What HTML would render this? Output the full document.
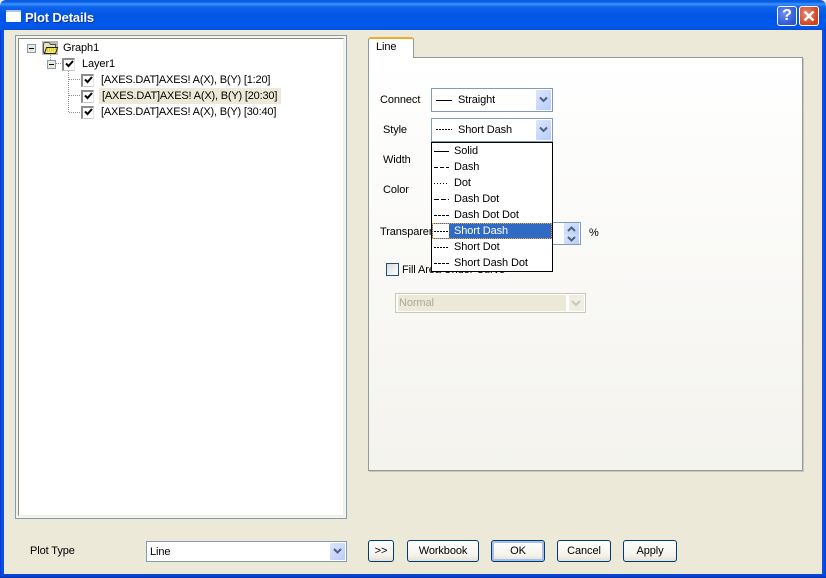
<!DOCTYPE html>
<html><head><meta charset="utf-8"><style>
html,body{margin:0;padding:0;width:826px;height:578px;overflow:hidden;background:#ECE9D8}
body{position:relative;font:11px/14px "Liberation Sans",sans-serif;color:#000;letter-spacing:-.1px}
div,span{position:absolute;box-sizing:border-box;white-space:nowrap}
svg{position:absolute;overflow:visible}
.t{height:14px}
.tr{letter-spacing:-.18px}
.combo{border:1px solid #7F9DB9;background:#fff}
.arrow{width:15px;background:linear-gradient(135deg,#DCE6FB,#B9CCF9);border-radius:1px;top:1px;bottom:1px;right:1px}
.btn{border:1px solid #003C74;border-radius:3px;background:linear-gradient(#fff,#F4F3EC 70%,#E3E0D3);text-align:center;line-height:20px;top:540px;height:22px}
.ck{width:13px;height:13px;border-top:2px solid #8d8d8d;border-left:2px solid #8d8d8d;border-right:1px solid #e4e4e4;border-bottom:1px solid #c8c8c8;background:#fff}
.ex{width:9px;height:9px;border:1px solid #7F9DB9;background:#ECE9D8}
.ex div{left:1px;top:3px;width:5px;height:1px;background:#000}
</style></head><body>
<div style="left:0;top:0;width:826px;height:30px;background:linear-gradient(#0A5BDC 0,#0A5FE8 2px,#3A93FF 4px,#0F63EA 7px,#0055E5 16px,#0058EE 26px,#0350D8 30px);border-radius:6px 6px 0 0"></div>
<div style="left:0;top:30px;width:4px;height:548px;background:linear-gradient(90deg,#0831D9,#0855DD 50%,#0A4BE0)"></div>
<div style="left:822px;top:30px;width:4px;height:548px;background:linear-gradient(90deg,#0A4BE0,#0855DD 50%,#0831D9)"></div>
<div style="left:0;top:574px;width:826px;height:4px;background:linear-gradient(#0A4BE0,#0841D0 50%,#0831B0)"></div>
<div style="left:6px;top:10px;width:15px;height:12px;background:#fff;border-top:2px solid #A9C8F5;border-radius:1px"></div>
<div style="left:25px;top:10px;color:#fff;font-size:13px;line-height:15px;font-weight:bold;letter-spacing:-.15px;text-shadow:1px 1px 0 #0A2E9C">Plot Details</div>
<div style="left:777px;top:6px;width:20px;height:20px;border:1px solid #fff;border-radius:3px;background:radial-gradient(circle at 35% 35%,#6C8EEF,#2A56D8 75%);color:#fff;font:bold 16px/18px 'Liberation Sans',sans-serif;letter-spacing:0;text-align:center">?</div>
<div style="left:799px;top:6px;width:20px;height:20px;border:1px solid #fff;border-radius:3px;background:radial-gradient(circle at 35% 35%,#E8866A,#D2401C 75%)">
<svg width="18" height="18" style="left:0;top:0"><path d="M4.500 4.500L13.500 13.500M13.500 4.500L4.500 13.500" stroke="#fff" stroke-width="2.600"/></svg></div>

<!-- tree -->
<div style="left:15px;top:35px;width:332px;height:484px;border:1px solid #7F9DB9;background:#F5F4EA"></div>
<div style="left:18px;top:38px;width:326px;height:478px;border:1px solid #8c8a7e;border-right-color:#F1EFE2;border-bottom-color:#F1EFE2;background:#fff"></div>
<svg width="826" height="578" style="left:0;top:0">
<g stroke="#909090" stroke-dasharray="1 1" fill="none"><path d="M50.500 53V60M56 63.500H62M68.500 71V113M69 79.500H81M69 95.500H81M69 112.500H81"/></g>
</svg>
<div class="ex" style="left:27px;top:44px"><div></div></div>
<div class="ex" style="left:47px;top:60px"><div></div></div>
<div style="left:42px;top:41px;width:16px;height:14px;background:#B8B8B0"></div>
<svg width="16" height="14" style="left:42px;top:41px"><path d="M1.500 11.500V2.500L3 1.500H7L8.500 3.500H13.500V11.500Z" fill="#E8E4C0" stroke="#555"/><path d="M2.500 12.500L4.500 6.500H15.500L13.500 12.500Z" fill="#F4E85C" stroke="#222"/><path d="M5 8H14M5 10H13" stroke="#C8B830" stroke-dasharray="1 1"/></svg>
<div class="t" style="left:63px;top:41px">Graph1</div>
<div class="ck" style="left:62px;top:58px"></div><div class="t" style="left:82px;top:57px">Layer1</div>
<div class="ck" style="left:81px;top:74px"></div>
<div class="ck" style="left:81px;top:90px"></div>
<div class="ck" style="left:81px;top:106px"></div>
<svg width="826" height="578" style="left:0;top:0"><g fill="none" stroke="#000" stroke-width="2"><path d="M66 63.500L68.500 66L73 61"/><path d="M85 79.500L87.500 82L92 77"/><path d="M85 95.500L87.500 98L92 93"/><path d="M85 111.500L87.500 114L92 109"/></g></svg>
<div class="t tr" style="left:101px;top:73px">[AXES.DAT]AXES! A(X), B(Y) [1:20]</div>
<div style="left:99px;top:88px;width:182px;height:16px;background:#ECE9D8"></div>
<div class="t tr" style="left:102px;top:89px">[AXES.DAT]AXES! A(X), B(Y) [20:30]</div>
<div class="t tr" style="left:101px;top:105px">[AXES.DAT]AXES! A(X), B(Y) [30:40]</div>

<!-- tab panel -->
<div style="left:368px;top:57px;width:435px;height:414px;border:1px solid #919B9C;background:linear-gradient(#fff,#F4F3EE);box-shadow:1px 1px 0 #C9C7BA"></div>
<div style="left:368px;top:37px;width:46px;height:21px;background:#fff;border:1px solid #919B9C;border-bottom:none;border-top:2px solid #F2A92F;border-radius:3px 3px 0 0"></div>
<div class="t" style="left:376px;top:40px">Line</div>

<div class="t" style="left:380px;top:93px">Connect</div>
<div class="t" style="left:383px;top:123px">Style</div>
<div class="t" style="left:383px;top:153px">Width</div>
<div class="t" style="left:383px;top:183px">Color</div>
<div class="t" style="left:380px;top:225px">Transparency</div>

<div class="combo" style="left:431px;top:88px;width:122px;height:24px"><div class="arrow"></div></div>
<div class="t" style="left:458px;top:93px">Straight</div>
<div class="combo" style="left:431px;top:118px;width:122px;height:24px"><div class="arrow"></div></div>
<div class="t" style="left:458px;top:123px">Short Dash</div>
<svg width="826" height="578" style="left:0;top:0"><path d="M436 100.500H452" stroke="#000"/><path d="M436 129.500H452" stroke="#000" stroke-dasharray="2 1"/><g fill="none" stroke="#4D6185" stroke-width="2"><path d="M540 97.500L543.500 101L547 97.500"/><path d="M540 127.500L543.500 131L547 127.500"/></g></svg>

<div class="combo" style="left:500px;top:222px;width:81px;height:23px"></div>
<div style="left:564px;top:223px;width:15px;height:11px;background:linear-gradient(135deg,#DCE6FB,#B9CCF9)"></div>
<div style="left:564px;top:234px;width:15px;height:10px;background:linear-gradient(135deg,#DCE6FB,#B9CCF9)"></div>
<svg width="826" height="578" style="left:0;top:0"><g fill="none" stroke="#4D6185" stroke-width="2"><path d="M568 231L571.500 227.500L575 231"/><path d="M568 237L571.500 240.500L575 237"/></g></svg>
<div class="t" style="left:589px;top:226px">%</div>

<div style="left:386px;top:263px;width:13px;height:13px;border:1px solid #1C5180;background:linear-gradient(135deg,#DCDCD7,#fff)"></div>
<div class="t" style="left:402px;top:263px">Fill Area Under Curve</div>

<div style="left:395px;top:293px;width:191px;height:20px;border:1px solid #C9C7BA;background:#fff"></div>
<div style="left:398px;top:295px;width:168px;height:16px;background:#ECE9D8"></div>
<div style="left:569px;top:295px;width:15px;height:16px;background:#F0EEE3"></div>
<svg width="826" height="578" style="left:0;top:0"><path d="M572 301L576 305L580 301" fill="none" stroke="#C9C7BA" stroke-width="2"/></svg>
<div class="t" style="left:399px;top:296px;color:#ACA899">Normal</div>

<!-- dropdown -->
<div style="left:431px;top:142px;width:122px;height:130px;background:#fff;border:1px solid #000"></div>
<div style="left:432px;top:223px;width:120px;height:16px;background:#316AC5;outline:1px dotted #F2A92F;outline-offset:-1px"></div>
<div style="left:433px;top:224px;width:16px;height:14px;background:#fff"></div>
<svg width="826" height="578" style="left:0;top:0"><g stroke="#000" fill="none">
<path d="M434 151.500H449"/>
<path d="M434 167.500H449" stroke-dasharray="4 2"/>
<path d="M434 183.500H449" stroke-dasharray="1 2"/>
<path d="M434 199.500H449" stroke-dasharray="5 2"/>
<path d="M434 215.500H449" stroke-dasharray="3 1"/>
<path d="M434 231.500H449" stroke-dasharray="2 1"/>
<path d="M434 247.500H449" stroke-dasharray="2 1"/>
<path d="M434 263.500H449" stroke-dasharray="3 1"/>
</g></svg>
<div class="t" style="left:454px;top:144px">Solid</div>
<div class="t" style="left:454px;top:160px">Dash</div>
<div class="t" style="left:454px;top:176px">Dot</div>
<div class="t" style="left:454px;top:192px">Dash Dot</div>
<div class="t" style="left:454px;top:208px">Dash Dot Dot</div>
<div class="t" style="left:454px;top:224px;color:#fff">Short Dash</div>
<div class="t" style="left:454px;top:240px">Short Dot</div>
<div class="t" style="left:454px;top:256px">Short Dash Dot</div>

<!-- bottom -->
<div class="t" style="left:30px;top:544px">Plot Type</div>
<div class="combo" style="left:146px;top:541px;width:201px;height:21px"><div class="arrow"></div></div>
<div class="t" style="left:150px;top:545px">Line</div>
<svg width="826" height="578" style="left:0;top:0"><path d="M334 549L337.500 552.500L341 549" fill="none" stroke="#4D6185" stroke-width="2"/></svg>
<div class="btn" style="left:368px;width:26px">&gt;&gt;</div>
<div class="btn" style="left:407px;width:72px">Workbook</div>
<div class="btn" style="left:491px;width:54px;box-shadow:inset 0 0 0 2px #A9BEEB">OK</div>
<div class="btn" style="left:557px;width:54px">Cancel</div>
<div class="btn" style="left:623px;width:54px">Apply</div>
</body></html>
